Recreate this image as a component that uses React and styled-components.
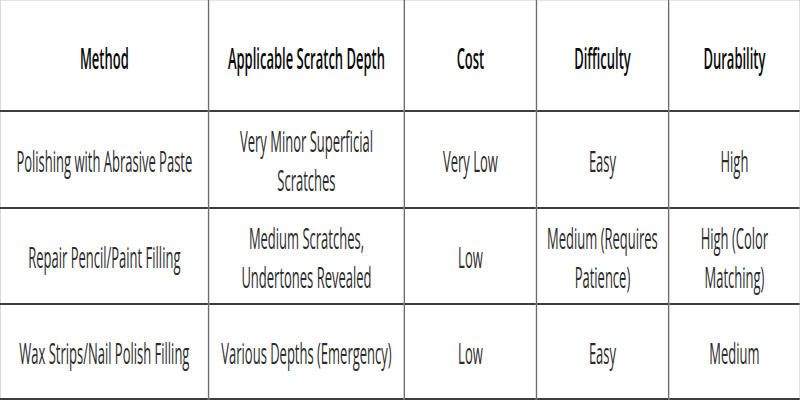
import React from 'react';
import styled, { createGlobalStyle } from 'styled-components';

const GlobalStyle = createGlobalStyle`
  html, body {
    margin: 0;
    padding: 0;
    background: #fff;
  }
  body {
    width: 800px;
    height: 400px;
    overflow: hidden;
  }
`;

const Frame = styled.div`
  width: 800px;
  height: 400px;
  overflow: hidden;
  background: #fff;
`;

// the table in the shot is a wide one squeezed horizontally,
// so it is laid out wide and scaled down on the x axis
const SCALE = 0.448;

const Sheet = styled.table`
  width: ${800 / SCALE}px;
  height: 400px;
  border-collapse: collapse;
  table-layout: fixed;
  transform: scaleX(${SCALE});
  transform-origin: 0 0;
  font-family: 'Open Sans', 'Noto Sans', sans-serif;
  border-top: 1px solid #e4e4e4;
  border-left: 2px solid #d4d4d4;
  border-right: 3px solid #9a9a9a;
  border-bottom: 2px solid #333;
`;

const Row = styled.tr`
  height: ${({ h }) => h}px;
`;

const HeadCell = styled.th`
  font-size: 29px;
  font-weight: 600;
  color: #0a0a0a;
  line-height: 38px;
  text-align: center;
  vertical-align: middle;
  padding: 5px 16px 0;
  border-left: 3px solid #6c6c6c;
  border-bottom: 2px solid #3c3c3c;
  &:first-child {
    border-left: 2px solid #d4d4d4;
  }
`;

const Cell = styled.td`
  font-size: 29px;
  font-weight: 400;
  color: #2b2b2b;
  line-height: 39px;
  text-align: center;
  vertical-align: middle;
  padding: 2px 16px 0;
  border-left: 3px solid #6c6c6c;
  border-bottom: 2px solid #3c3c3c;
  &:first-child {
    border-left: 2px solid #d4d4d4;
  }
`;

const columns = [
  { title: 'Method', width: 208 },
  { title: 'Applicable Scratch Depth', width: 196 },
  { title: 'Cost', width: 132 },
  { title: 'Difficulty', width: 132 },
  { title: 'Durability', width: 132 },
];

const rows = [
  {
    h: 97,
    cells: [
      'Polishing with Abrasive Paste',
      'Very Minor Superficial Scratches',
      'Very Low',
      'Easy',
      'High',
    ],
  },
  {
    h: 96,
    cells: [
      'Repair Pencil/Paint Filling',
      'Medium Scratches, Undertones Revealed',
      'Low',
      'Medium (Requires Patience)',
      'High (Color Matching)',
    ],
  },
  {
    h: 95,
    cells: [
      'Wax Strips/Nail Polish Filling',
      'Various Depths (Emergency)',
      'Low',
      'Easy',
      'Medium',
    ],
  },
];

const App = () => {
  return (
    <Frame>
      <GlobalStyle />
      <Sheet>
        <colgroup>
          {columns.map((col) => (
            <col key={col.title} style={{ width: col.width / SCALE }} />
          ))}
        </colgroup>
        <thead>
          <Row h={110}>
            {columns.map((col) => (
              <HeadCell key={col.title}>{col.title}</HeadCell>
            ))}
          </Row>
        </thead>
        <tbody>
          {rows.map((row, i) => (
            <Row h={row.h} key={i}>
              {row.cells.map((text, j) => (
                <Cell key={j}>{text}</Cell>
              ))}
            </Row>
          ))}
        </tbody>
      </Sheet>
    </Frame>
  );
};

export default App;
